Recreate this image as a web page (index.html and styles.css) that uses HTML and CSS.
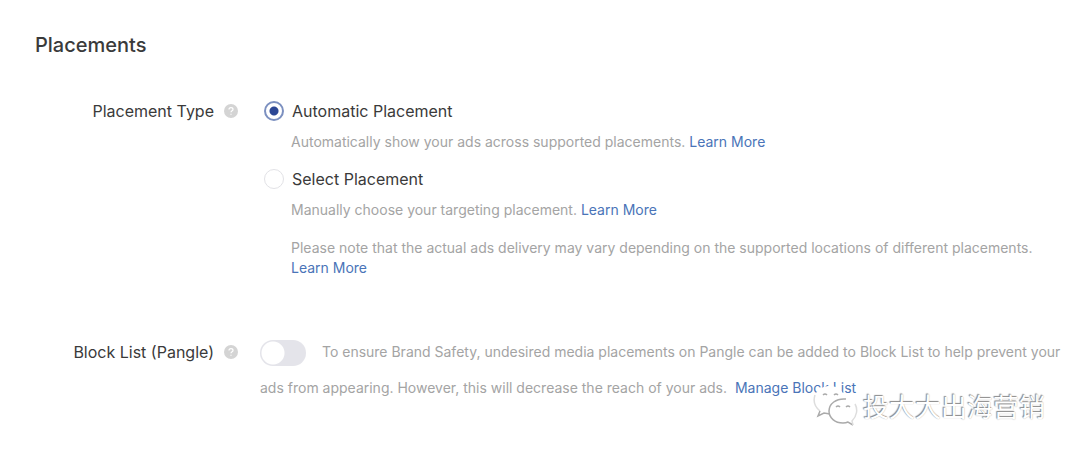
FILE: index.html
```html
<!DOCTYPE html>
<html lang="en">
<head>
    <meta charset="UTF-8">
    <meta name="viewport" content="width=device-width, initial-scale=1.0">
    <title>Placements</title>
    <link rel="stylesheet" href="styles.css">
</head>
<body>
    <main class="container">
        <h1>Placements</h1>

        <div class="row" role="radiogroup" aria-labelledby="typeLabel">
            <div class="row-label">
                <span id="typeLabel">Placement Type</span>
                <svg class="help" viewBox="0 0 14 14" aria-hidden="true">
                    <circle cx="7" cy="7" r="7" />
                    <path d="M5 5.6C5 4.4 5.8 3.7 7 3.7s2 .7 2 1.7C9 6.7 7 6.8 7 8.3M7 9.7v1.1" />
                </svg>
            </div>
            <div class="options">
                <div class="option">
                    <input type="radio" id="automatic" name="placement" checked>
                    <label for="automatic">Automatic Placement</label>
                </div>
                <p class="hint">Automatically show your ads across supported placements. <a href="#">Learn More</a></p>

                <div class="option">
                    <input type="radio" id="select" name="placement">
                    <label for="select">Select Placement</label>
                </div>
                <p class="hint">Manually choose your targeting placement. <a href="#">Learn More</a></p>
                <p class="hint">Please note that the actual ads delivery may vary depending on the supported locations of different placements. <a href="#">Learn More</a></p>
            </div>
        </div>

        <div class="row">
            <div class="row-label">
                <label for="blockList">Block List (Pangle)</label>
                <svg class="help" viewBox="0 0 14 14" aria-hidden="true">
                    <circle cx="7" cy="7" r="7" />
                    <path d="M5 5.6C5 4.4 5.8 3.7 7 3.7s2 .7 2 1.7C9 6.7 7 6.8 7 8.3M7 9.7v1.1" />
                </svg>
            </div>
            <p class="block-text">
                <input type="checkbox" class="switch" id="blockList">
                To ensure Brand Safety, undesired media placements on Pangle can be added to Block List to help prevent your ads from appearing. However, this will decrease the reach of your ads.
                <a href="#" class="manage">Manage Block List</a>
            </p>
        </div>
    </main>

    <div class="watermark">
        <svg class="wechat" viewBox="0 0 46 40" aria-hidden="true">
            <path class="bubble" d="M18 0C9 0 2 6 2 14c0 4 2 8 6 11l-2 5 7-3c2 1 3 1 5 1 8 0 15-6 15-14S26 0 18 0z" />
            <path class="outline faint" d="M3 9c-2 6 0 12 5 16" />
            <path class="outline" d="M8 25l-2 5 6-3 6 1" />
            <path class="bubble" d="M31 13c-8 0-14 5-14 12s6 12 14 12c2 0 3 0 5-1l5 3-1-4c3-2 5-6 5-10 0-7-6-12-14-12z" />
            <path class="outline" d="M34 13c-10-1-17 5-17 12s6 12 14 12c2 0 3 0 5-1l5 3" />
            <path class="outline faint" d="M43 18c3 5 2 12-3 17l1 4" />
            <path class="outline" d="M11 9q2-2 4 0M22 9q2-2 4 0M24 21q2-2 4 0M34 21q2-2 4 0" />
        </svg>
        <span>投大大出海营销</span>
    </div>
</body>
</html>
```
FILE: styles.css
```css
* {
    box-sizing: border-box;
}
body {
    margin: 0;
    font-family: Inter, "Noto Sans CJK SC", sans-serif;
    font-size: 16px;
    line-height: 24px;
    background-color: #fff;
    color: #3a3a3a;
}
.container {
    padding: 32px 16px 0 35px;
}
h1 {
    margin: 0 0 41px;
    font-size: 20px;
    line-height: 26px;
    font-weight: 500;
}
.row {
    display: grid;
    grid-template-columns: 203px 1fr;
    column-gap: 22px;
}
.row + .row {
    margin-top: 47px;
}
.row-label {
    display: flex;
    justify-content: flex-end;
    align-items: center;
    gap: 10px;
    height: 24px;
}
.help {
    width: 14px;
    height: 14px;
    fill: #d4d4d4;
}
.help path {
    fill: none;
    stroke: #fff;
    stroke-width: 1.2;
}
.options {
    padding-left: 4px;
}
.option {
    display: flex;
    align-items: center;
    gap: 8px;
}
.option input {
    appearance: none;
    width: 20px;
    height: 20px;
    margin: 0;
    border: 1px solid #e2e2e6;
    border-radius: 50%;
}
.option input:checked {
    border: 2px solid #7c90c0;
    background: radial-gradient(circle, #2c4795 4px, transparent 5px);
}
.hint {
    margin: 9px 0 15px;
    padding: 0 20px 0 27px;
    font-size: 14px;
    line-height: 20px;
    color: #a4a4a4;
}
.hint + .hint {
    margin-top: 18px;
}
a {
    color: #4a74b8;
    text-decoration: none;
}
.block-text {
    margin: -6px 0 0;
    font-size: 14px;
    line-height: 36px;
    color: #a4a4a4;
}
.switch {
    appearance: none;
    width: 46px;
    height: 26px;
    margin: 0 12px 0 0;
    border-radius: 13px;
    vertical-align: middle;
    background: radial-gradient(circle at 13px 13px, #fff 11px, transparent 12px) #e4e4ea;
}
.manage {
    margin-left: 4px;
}
.watermark {
    position: absolute;
    right: 35px;
    bottom: 28px;
    display: flex;
    align-items: center;
    gap: 5px;
    font-family: "Noto Sans CJK SC", sans-serif;
    font-size: 26px;
    line-height: 40px;
    color: #fff;
    text-shadow: -1px -1px 1px #888, 0 0 1px #aaa;
}
.wechat {
    width: 46px;
    height: 40px;
}
.bubble {
    fill: #fff;
}
.outline {
    fill: none;
    stroke: #aaa;
    stroke-width: 1.5;
}
.faint {
    stroke: #ddd;
}
```
